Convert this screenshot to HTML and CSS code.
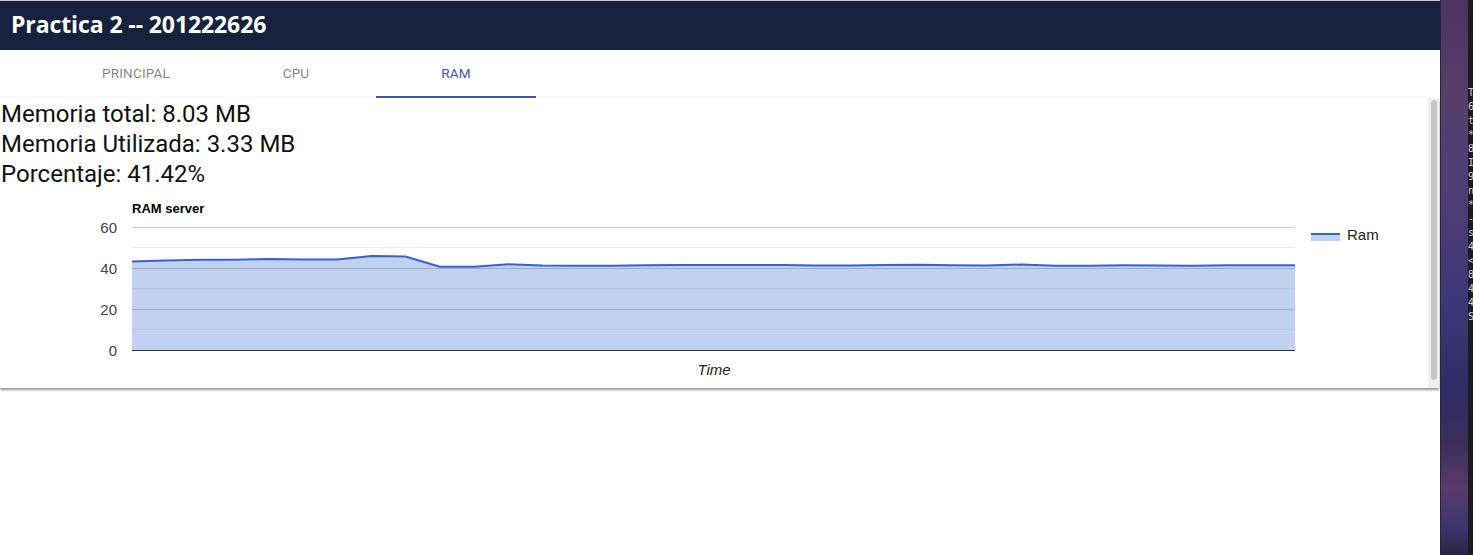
FILE: index.html
```html
<!DOCTYPE html>
<html lang="es">
<head>
<meta charset="utf-8">
<title>Practica 2</title>
<link rel="stylesheet" href="styles.css">
</head>
<body>
<div class="screen">
  <div class="app">
    <header class="appbar">
      <h1 class="title">Practica 2 -- 201222626</h1>
    </header>
    <nav class="tabs">
      <div class="tab">PRINCIPAL</div>
      <div class="tab">CPU</div>
      <div class="tab active">RAM</div>
    </nav>
    <section class="card">
      <div class="card-body">
        <div class="stats">
          <div class="stat">Memoria total: 8.03 MB</div>
          <div class="stat">Memoria Utilizada: 3.33 MB</div>
          <div class="stat">Porcentaje: 41.42%</div>
        </div>
        <svg class="chart" width="1428" height="200" viewBox="0 0 1428 200">
          <text class="chart-title" x="132" y="25">RAM server</text>
          <g class="grid-minor">
            <line x1="132" x2="1295" y1="59.5" y2="59.5"/>
            <line x1="132" x2="1295" y1="100.5" y2="100.5"/>
            <line x1="132" x2="1295" y1="141.5" y2="141.5"/>
          </g>
          <g class="grid-major">
            <line x1="132" x2="1295" y1="39.5" y2="39.5"/>
            <line x1="132" x2="1295" y1="80.5" y2="80.5"/>
            <line x1="132" x2="1295" y1="121.5" y2="121.5"/>
          </g>
          <polygon class="area" points="132,73.6 166.2,72.4 200.4,71.8 234.6,71.8 268.8,71.0 303,71.6 337.2,71.6 371.4,67.9 405.6,68.5 439.9,78.8 474.1,78.8 508.3,76.3 542.5,77.5 576.7,77.7 610.9,77.7 645.1,77.3 679.3,77.1 713.5,76.9 747.7,76.9 782,77.1 816.1,77.5 850.3,77.5 884.5,76.9 918.7,76.7 952.9,77.3 987.2,77.5 1021.4,76.5 1055.6,77.7 1089.8,77.7 1124,77.3 1158.2,77.5 1192.4,77.7 1226.6,77.3 1260.8,77.3 1295,77.3 1295,162 132,162"/>
          <polyline class="line" points="132,73.6 166.2,72.4 200.4,71.8 234.6,71.8 268.8,71.0 303,71.6 337.2,71.6 371.4,67.9 405.6,68.5 439.9,78.8 474.1,78.8 508.3,76.3 542.5,77.5 576.7,77.7 610.9,77.7 645.1,77.3 679.3,77.1 713.5,76.9 747.7,76.9 782,77.1 816.1,77.5 850.3,77.5 884.5,76.9 918.7,76.7 952.9,77.3 987.2,77.5 1021.4,76.5 1055.6,77.7 1089.8,77.7 1124,77.3 1158.2,77.5 1192.4,77.7 1226.6,77.3 1260.8,77.3 1295,77.3"/>
          <line class="baseline" x1="132" x2="1295" y1="162.5" y2="162.5"/>
          <g class="axis-label">
            <text x="117" y="45">60</text>
            <text x="117" y="86">40</text>
            <text x="117" y="127">20</text>
            <text x="117" y="168">0</text>
          </g>
          <text class="axis-title" x="714" y="187">Time</text>
          <rect class="legend-fill" x="1311" y="46" width="29" height="7"/>
          <line class="legend-line" x1="1311" x2="1340" y1="46" y2="46"/>
          <text class="legend-text" x="1347" y="52">Ram</text>
        </svg>
      </div>
      <div class="scrollbar"><div class="thumb"></div></div>
    </section>
  </div>
  <aside class="desktop">
    <div class="art"></div>
    <div class="term">
      <span>T</span><span>6</span><span>t</span><span>*</span><span>8</span><span>I</span><span>9</span><span>n</span><span>*</span><span>-</span><span>s</span><span>4</span><span>&lt;</span><span>8</span><span>4</span><span>4</span><span>S</span>
    </div>
  </aside>
</div>
</body>
</html>
```

FILE: styles.css
```css
* { box-sizing: border-box; }
html, body { margin: 0; padding: 0; background: #fff; }
body { width: 1473px; height: 555px; overflow: hidden; }

.screen { display: flex; width: 1473px; height: 555px; }

.app { width: 1440px; background: #fff; border-top: 1px solid #cfcac2; }

.appbar {
  height: 49px;
  background: #15213d;
  display: flex;
  align-items: center;
  padding-left: 11px;
}
.title {
  margin: 0;
  color: #fff;
  font-family: "Open Sans", "Noto Sans", sans-serif;
  font-weight: 700;
  font-size: 23px;
  letter-spacing: -0.1px;
  line-height: 1;
  padding-bottom: 2px;
}

.tabs {
  display: flex;
  height: 48px;
  padding-left: 56px;
  background: #fff;
}
.tab {
  width: 160px;
  display: flex;
  align-items: center;
  justify-content: center;
  font-family: Roboto, "Liberation Sans", sans-serif;
  font-size: 13.5px;
  letter-spacing: 0.2px;
  color: rgba(0, 0, 0, 0.5);
  border-bottom: 2px solid transparent;
}
.tab.active { color: #3f51b5; border-bottom-color: #3f51b5; }

.card {
  display: flex;
  width: 1439px;
  height: 290px;
  background: #fff;
  box-shadow: 0 2px 2px rgba(0,0,0,0.35), 0 1px 4px rgba(0,0,0,0.12);
}
.card-body { flex: 1; min-width: 0; }

.stats { padding: 1px 0 0 1px; height: 91px; }
.stat {
  font-family: Roboto, "Liberation Sans", sans-serif;
  font-size: 24px;
  line-height: 30px;
  color: #111;
  white-space: nowrap;
}

.chart { display: block; margin-top: -1px; }
.chart-title { font-family: "Liberation Sans", Arial, sans-serif; font-weight: 700; font-size: 13px; fill: #000; }
.grid-minor line { stroke: #ebebeb; stroke-width: 1; }
.grid-major line { stroke: #cccccc; stroke-width: 1; }
.area { fill: #3366cc; fill-opacity: 0.3; stroke: none; }
.line { fill: none; stroke: #3366cc; stroke-width: 2; stroke-linejoin: round; }
.baseline { stroke: #333; stroke-width: 1; }
.axis-label text { font-family: "Liberation Sans", Arial, sans-serif; font-size: 15px; fill: #444; text-anchor: end; }
.axis-title { font-family: "Liberation Sans", Arial, sans-serif; font-size: 15px; font-style: italic; fill: #222; text-anchor: middle; }
.legend-fill { fill: #3366cc; fill-opacity: 0.3; }
.legend-line { stroke: #3366cc; stroke-width: 2; }
.legend-text { font-family: "Liberation Sans", Arial, sans-serif; font-size: 15px; fill: #222; }

.scrollbar {
  width: 11px;
  background: #f1efec;
  padding: 2px 2px 8px 3px;
}
.thumb { height: 100%; background: #c6c6c6; border-radius: 3px; }

.desktop { width: 33px; display: flex; }
.art {
  width: 28px;
  background: linear-gradient(180deg, #4a3560 0%, #55406e 20%, #4b3b75 40%, #3b3878 55%, #2e2d66 70%, #3a2f5a 80%, #5a3a6a 88%, #3b3570 95%, #2a2440 100%);
  border-left: 1px solid #2a2040;
}
.term {
  width: 5px;
  background: #1c1c1c;
  overflow: hidden;
  display: flex;
  flex-direction: column;
  padding-top: 88px;
  gap: 4px;
  font-family: "DejaVu Sans Mono", monospace;
  font-size: 10px;
  line-height: 10px;
  color: #cfcfcf;
}
```
